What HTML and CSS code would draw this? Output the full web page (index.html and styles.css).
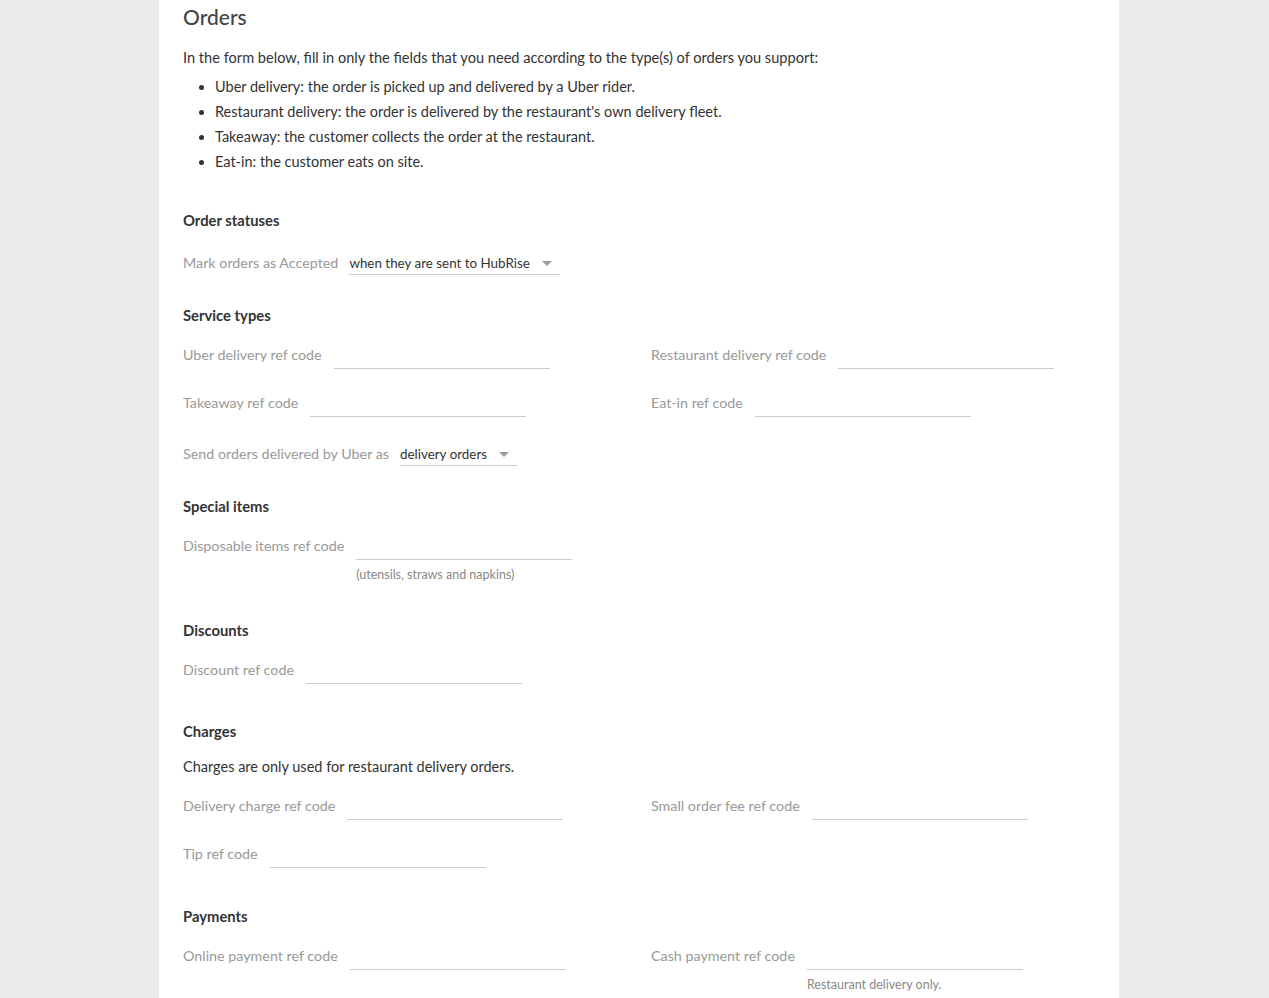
FILE: index.html
```html
<!DOCTYPE html>
<html lang="en">
<head>
  <meta charset="UTF-8" />
  <meta name="viewport" content="width=device-width, initial-scale=1.0"/>
  <title>Orders</title>
  <link rel="stylesheet" href="styles.css">
</head>
<body>
  <div class="page">
    <div class="panel">
      <h2 class="title">Orders</h2>
      <p class="intro">In the form below, fill in only the fields that you need according to the type(s) of orders you support:</p>
      <ul class="types">
        <li>Uber delivery: the order is picked up and delivered by a Uber rider.</li>
        <li>Restaurant delivery: the order is delivered by the restaurant's own delivery fleet.</li>
        <li>Takeaway: the customer collects the order at the restaurant.</li>
        <li>Eat-in: the customer eats on site.</li>
      </ul>

      <div class="section section-first">
        <h3>Order statuses</h3>
        <div class="row row-select">
          <label>Mark orders as Accepted</label>
          <div class="select">
            <span>when they are sent to HubRise</span>
            <svg class="caret" viewBox="0 0 10 5"><polygon points="0,0 10,0 5,5" /></svg>
          </div>
        </div>
      </div>

      <div class="section">
        <h3>Service types</h3>
        <div class="cols">
          <div class="row">
            <label>Uber delivery ref code</label>
            <div class="field"><div class="input"></div></div>
          </div>
          <div class="row">
            <label>Restaurant delivery ref code</label>
            <div class="field"><div class="input"></div></div>
          </div>
          <div class="row">
            <label>Takeaway ref code</label>
            <div class="field"><div class="input"></div></div>
          </div>
          <div class="row">
            <label>Eat-in ref code</label>
            <div class="field"><div class="input"></div></div>
          </div>
        </div>
        <div class="row row-select">
          <label>Send orders delivered by Uber as</label>
          <div class="select">
            <span>delivery orders</span>
            <svg class="caret" viewBox="0 0 10 5"><polygon points="0,0 10,0 5,5" /></svg>
          </div>
        </div>
      </div>

      <div class="section">
        <h3>Special items</h3>
        <div class="row">
          <label>Disposable items ref code</label>
          <div class="field">
            <div class="input"></div>
            <div class="hint">(utensils, straws and napkins)</div>
          </div>
        </div>
      </div>

      <div class="section">
        <h3>Discounts</h3>
        <div class="row">
          <label>Discount ref code</label>
          <div class="field"><div class="input"></div></div>
        </div>
      </div>

      <div class="section">
        <h3>Charges</h3>
        <p class="note">Charges are only used for restaurant delivery orders.</p>
        <div class="cols">
          <div class="row">
            <label>Delivery charge ref code</label>
            <div class="field"><div class="input"></div></div>
          </div>
          <div class="row">
            <label>Small order fee ref code</label>
            <div class="field"><div class="input"></div></div>
          </div>
          <div class="row">
            <label>Tip ref code</label>
            <div class="field"><div class="input"></div></div>
          </div>
        </div>
      </div>

      <div class="section section-payments">
        <h3>Payments</h3>
        <div class="cols">
          <div class="row">
            <label>Online payment ref code</label>
            <div class="field"><div class="input"></div></div>
          </div>
          <div class="row">
            <label>Cash payment ref code</label>
            <div class="field">
              <div class="input"></div>
              <div class="hint">Restaurant delivery only.</div>
            </div>
          </div>
        </div>
      </div>
    </div>
  </div>
</body>
</html>
```

FILE: styles.css
```css
* {
  box-sizing: border-box;
}

html, body {
  margin: 0;
  background: #ebebeb;
  font-family: 'Lato', sans-serif;
  font-size: 14.5px;
  color: #333;
}

.page {
  padding-left: 9px;
}

.panel {
  width: 960px;
  margin: 0 auto;
  background: #fff;
  padding: 5px 24px 60px;
}

.title {
  margin: 0;
  font-size: 21px;
  line-height: 24px;
  font-weight: 500;
  color: #444;
}

.intro {
  margin: 19px 0 6px;
  line-height: 20px;
  font-size: 14.6px;
}

.types {
  margin: 0;
  padding-left: 32px;
}

.types li {
  line-height: 25px;
}

.section {
  display: flow-root;
  margin-top: 17px;
}

.section-first {
  margin-top: 36px;
}

.section-payments {
  margin-top: 18px;
}

.section h3 {
  margin: 0 0 16px;
  font-size: 14.8px;
  line-height: 20px;
  font-weight: 700;
  color: #333;
}

.note {
  margin: 6px 0 15px;
  line-height: 20px;
}

.cols {
  display: grid;
  grid-template-columns: 468px 1fr;
}

.row {
  display: flex;
  align-items: flex-start;
  margin-bottom: 20px;
}

.row label {
  line-height: 28px;
  font-size: 14.3px;
  color: #999;
  margin-right: 12px;
  white-space: nowrap;
}

.field {
  display: flex;
  flex-direction: column;
}

.input {
  width: 216px;
  height: 28px;
  border-bottom: 1px solid #ccc;
}

.hint {
  margin-top: 7px;
  font-size: 12.5px;
  line-height: 16px;
  color: #888;
}

.row-select {
  padding-top: 5px;
  margin-bottom: 13px;
  align-items: center;
}

.row-select label {
  line-height: 24px;
  margin-right: 11px;
}

.select {
  position: relative;
  height: 24px;
  line-height: 24px;
  font-size: 13.4px;
  color: #333;
  padding-right: 30px;
  border-bottom: 1px solid #ccc;
}

.caret {
  position: absolute;
  right: 8px;
  top: 10px;
  width: 10px;
  height: 5px;
  fill: #999;
}
```
